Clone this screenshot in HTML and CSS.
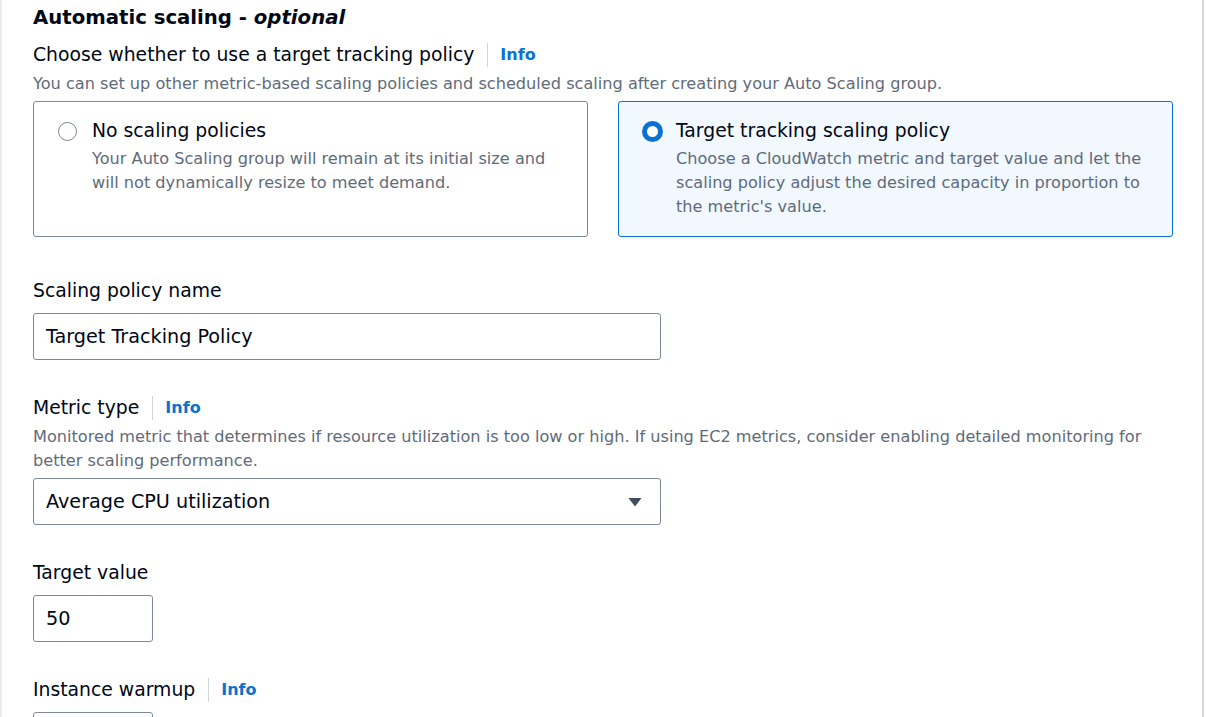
FILE: index.html
```html
<!DOCTYPE html>
<html>
<head>
<meta charset="utf-8">
<link rel="stylesheet" href="styles.css">
</head>
<body>
<div class="panel">
  <h2 class="title">Automatic scaling - <i>optional</i></h2>

  <div class="field field-first">
    <div class="label-row">
      <span class="label">Choose whether to use a target tracking policy</span>
      <span class="info">Info</span>
    </div>
    <div class="desc">You can set up other metric-based scaling policies and scheduled scaling after creating your Auto Scaling group.</div>
    <div class="tiles">
      <div class="tile">
        <span class="radio"></span>
        <div class="tile-text">
          <div class="tile-title">No scaling policies</div>
          <div class="tile-desc">Your Auto Scaling group will remain at its initial size and will not dynamically resize to meet demand.</div>
        </div>
      </div>
      <div class="tile tile-selected">
        <span class="radio radio-checked"></span>
        <div class="tile-text">
          <div class="tile-title">Target tracking scaling policy</div>
          <div class="tile-desc">Choose a CloudWatch metric and target value and let the scaling policy adjust the desired capacity in proportion to the metric's value.</div>
        </div>
      </div>
    </div>
  </div>

  <div class="field field-after-tiles">
    <div class="label-row"><span class="label">Scaling policy name</span></div>
    <div class="input input-wide input-gap">Target Tracking Policy</div>
  </div>

  <div class="field">
    <div class="label-row">
      <span class="label">Metric type</span>
      <span class="info">Info</span>
    </div>
    <div class="desc">Monitored metric that determines if resource utilization is too low or high. If using EC2 metrics, consider enabling detailed monitoring for better scaling performance.</div>
    <div class="input input-wide select">
      <span>Average CPU utilization</span>
      <svg class="caret" width="14" height="10" viewBox="0 0 14 10"><path d="M0.5 1 L13.5 1 L7 9.5 Z" fill="#414d5c"/></svg>
    </div>
  </div>

  <div class="field">
    <div class="label-row"><span class="label">Target value</span></div>
    <div class="input input-small input-gap">50</div>
  </div>

  <div class="field">
    <div class="label-row">
      <span class="label">Instance warmup</span>
      <span class="info">Info</span>
    </div>
    <div class="input input-small input-gap"></div>
  </div>
</div>
</body>
</html>
```

FILE: styles.css
```css
html, body {
  margin: 0;
  padding: 0;
  background: #ffffff;
}
body {
  font-family: "DejaVu Sans", "Open Sans", sans-serif;
  color: #000716;
  overflow: hidden;
  height: 717px;
}
.panel {
  width: 1204px;
  height: 717px;
  overflow: hidden;
  border-left: 2px solid #e9ebed;
  border-right: 2px solid #d5d8dc;
  padding: 6px 0 0 31px;
  box-sizing: border-box;
}
.title {
  margin: 0;
  font-size: 19.7px;
  line-height: 24px;
  font-weight: 700;
}
.title i {
  font-weight: 700;
}
.field {
  margin-top: 34px;
}
.field-first {
  margin-top: 11px;
}
.field-after-tiles {
  margin-top: 40px;
}
.label-row {
  display: flex;
  align-items: center;
  height: 24px;
  padding-top: 2px;
}
.label {
  font-size: 18.8px;
  line-height: 24px;
}
.info {
  font-size: 16px;
  font-weight: 700;
  color: #0972d3;
  margin-left: 13px;
  padding-left: 12px;
  border-left: 1px solid #d1d5db;
  line-height: 24px;
}
.desc {
  margin-top: 5px;
  font-size: 16.15px;
  line-height: 24px;
  color: #5f6b7a;
  width: 1150px;
}
.tiles {
  margin-top: 5px;
  display: grid;
  grid-template-columns: 555px 555px;
  column-gap: 30px;
}
.tile {
  display: flex;
  align-items: flex-start;
  border: 1px solid #7d8998;
  border-radius: 3px;
  padding: 17px 20px 17px 25px;
  box-sizing: border-box;
  min-height: 136px;
}
.tile-selected {
  background: #f1f8ff;
  border-color: #0972d3;
}
.radio {
  flex: none;
  width: 19px;
  height: 19px;
  margin-top: 3px;
  margin-left: -1px;
  border: 1.5px solid #7d8998;
  border-radius: 50%;
  box-sizing: border-box;
  background: #ffffff;
}
.radio-checked {
  width: 21px;
  height: 21px;
  margin-top: 2px;
  margin-left: -2px;
  border: 5.5px solid #0972d3;
}
.tile-text {
  margin-left: 15px;
}
.radio-checked + .tile-text {
  margin-left: 13px;
}
.tile-title {
  font-size: 18.8px;
  line-height: 24px;
}
.tile-desc {
  margin-top: 4px;
  font-size: 16.15px;
  line-height: 24px;
  color: #5f6b7a;
  width: 476px;
}
.input {
  display: flex;
  align-items: center;
  height: 47px;
  border: 1px solid #7d8998;
  border-radius: 3px;
  padding: 0 12px;
  box-sizing: border-box;
  font-size: 19.2px;
  background: #ffffff;
}
.input-gap {
  margin-top: 10px;
}
.input-wide {
  width: 628px;
}
.input-small {
  width: 120px;
}
.select {
  margin-top: 5px;
  justify-content: space-between;
  padding-right: 18px;
}
.caret {
  display: block;
}
```
